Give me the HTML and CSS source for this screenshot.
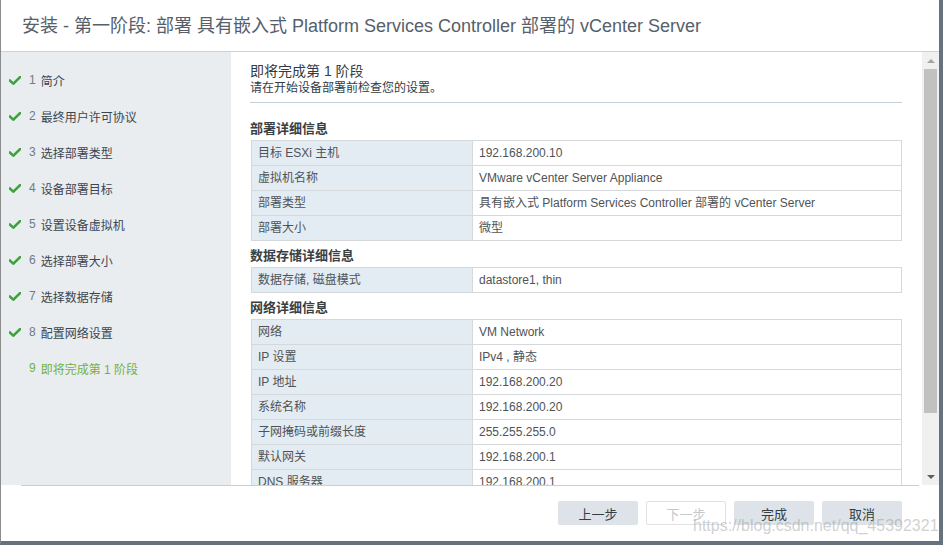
FILE: index.html
```html
<!DOCTYPE html>
<html lang="zh-CN">
<head>
<meta charset="utf-8">
<title>安装 - 第一阶段</title>
<link rel="stylesheet" href="styles.css">
</head>
<body>
<div class="window">
  <header class="title-bar">
    <h1 class="title">安装 - 第一阶段: 部署 具有嵌入式 Platform Services Controller 部署的 vCenter Server</h1>
  </header>
  <div class="main">
    <nav class="steps">
      <div class="step done"><span class="slot"><svg class="check" viewBox="0 0 12 9" width="12" height="9"><path d="M1 4.6 L4.4 7.6 L11 1.2" /></svg></span><span class="num">1</span><span class="label">简介</span></div>
      <div class="step done"><span class="slot"><svg class="check" viewBox="0 0 12 9" width="12" height="9"><path d="M1 4.6 L4.4 7.6 L11 1.2" /></svg></span><span class="num">2</span><span class="label">最终用户许可协议</span></div>
      <div class="step done"><span class="slot"><svg class="check" viewBox="0 0 12 9" width="12" height="9"><path d="M1 4.6 L4.4 7.6 L11 1.2" /></svg></span><span class="num">3</span><span class="label">选择部署类型</span></div>
      <div class="step done"><span class="slot"><svg class="check" viewBox="0 0 12 9" width="12" height="9"><path d="M1 4.6 L4.4 7.6 L11 1.2" /></svg></span><span class="num">4</span><span class="label">设备部署目标</span></div>
      <div class="step done"><span class="slot"><svg class="check" viewBox="0 0 12 9" width="12" height="9"><path d="M1 4.6 L4.4 7.6 L11 1.2" /></svg></span><span class="num">5</span><span class="label">设置设备虚拟机</span></div>
      <div class="step done"><span class="slot"><svg class="check" viewBox="0 0 12 9" width="12" height="9"><path d="M1 4.6 L4.4 7.6 L11 1.2" /></svg></span><span class="num">6</span><span class="label">选择部署大小</span></div>
      <div class="step done"><span class="slot"><svg class="check" viewBox="0 0 12 9" width="12" height="9"><path d="M1 4.6 L4.4 7.6 L11 1.2" /></svg></span><span class="num">7</span><span class="label">选择数据存储</span></div>
      <div class="step done"><span class="slot"><svg class="check" viewBox="0 0 12 9" width="12" height="9"><path d="M1 4.6 L4.4 7.6 L11 1.2" /></svg></span><span class="num">8</span><span class="label">配置网络设置</span></div>
      <div class="step active"><span class="slot"></span><span class="num">9</span><span class="label">即将完成第 1 阶段</span></div>
    </nav>
    <section class="content">
      <div class="scroll">
        <h2 class="page-title">即将完成第 1 阶段</h2>
        <p class="page-sub">请在开始设备部署前检查您的设置。</p>
        <div class="divider"></div>

        <h3 class="section first">部署详细信息</h3>
        <div class="kv">
          <div class="kv-row"><div class="k">目标 ESXi 主机</div><div class="v">192.168.200.10</div></div>
          <div class="kv-row"><div class="k">虚拟机名称</div><div class="v">VMware vCenter Server Appliance</div></div>
          <div class="kv-row"><div class="k">部署类型</div><div class="v">具有嵌入式 Platform Services Controller 部署的 vCenter Server</div></div>
          <div class="kv-row"><div class="k">部署大小</div><div class="v">微型</div></div>
        </div>

        <h3 class="section">数据存储详细信息</h3>
        <div class="kv">
          <div class="kv-row"><div class="k">数据存储, 磁盘模式</div><div class="v">datastore1, thin</div></div>
        </div>

        <h3 class="section">网络详细信息</h3>
        <div class="kv">
          <div class="kv-row"><div class="k">网络</div><div class="v">VM Network</div></div>
          <div class="kv-row"><div class="k">IP 设置</div><div class="v">IPv4 , 静态</div></div>
          <div class="kv-row"><div class="k">IP 地址</div><div class="v">192.168.200.20</div></div>
          <div class="kv-row"><div class="k">系统名称</div><div class="v">192.168.200.20</div></div>
          <div class="kv-row"><div class="k">子网掩码或前缀长度</div><div class="v">255.255.255.0</div></div>
          <div class="kv-row"><div class="k">默认网关</div><div class="v">192.168.200.1</div></div>
          <div class="kv-row"><div class="k">DNS 服务器</div><div class="v">192.168.200.1</div></div>
        </div>
      </div>
      <div class="scrollbar">
        <div class="sb-btn"><span class="arrow up"></span></div>
        <div class="sb-track"><div class="sb-thumb"></div></div>
        <div class="sb-btn"><span class="arrow down"></span></div>
      </div>
    </section>
  </div>
  <footer class="footer">
    <div class="footer-line"></div>
    <div class="buttons">
      <button class="btn">上一步</button>
      <button class="btn disabled">下一步</button>
      <button class="btn">完成</button>
      <button class="btn">取消</button>
    </div>
  </footer>
  <div class="watermark">https://blog.csdn.net/qq_45392321</div>
</div>
</body>
</html>
```

FILE: styles.css
```css
* { box-sizing: border-box; }

html, body {
  margin: 0;
  padding: 0;
  background: #ffffff;
}

body {
  font-family: "Liberation Sans", "Noto Sans CJK SC", sans-serif;
  width: 943px;
  height: 545px;
  overflow: hidden;
}

.window {
  position: relative;
  width: 943px;
  height: 545px;
  border-left: 1px solid #8c8c8c;
  border-right: 4px solid #66727d;
  border-bottom: 4px solid #66727d;
  display: flex;
  flex-direction: column;
  background: #ffffff;
}

.title-bar {
  height: 52px;
  flex: none;
  border-bottom: 1px solid #cfd3d6;
  display: flex;
  align-items: center;
  padding-left: 21px;
}

.title {
  margin: 0;
  font-size: 18px;
  font-weight: normal;
  color: #56606a;
  line-height: 22px;
  white-space: nowrap;
}

.main {
  height: 433px;
  flex: none;
  display: flex;
}

.steps {
  width: 230px;
  flex: none;
  background: #e9edf0;
  padding: 10px 0 0 8px;
}

.step {
  height: 36px;
  display: flex;
  align-items: center;
  font-size: 12px;
  color: #3b4650;
}

.slot {
  width: 20px;
  flex: none;
  display: flex;
  align-items: center;
}

.check path {
  fill: none;
  stroke: #3aa536;
  stroke-width: 2.6;
  stroke-linecap: square;
}

.num {
  color: #6f7a84;
  margin-right: 5px;
}

.step.active .num,
.step.active .label {
  color: #74b044;
}

.content {
  flex: 1;
  display: flex;
  min-width: 0;
}

.scroll {
  flex: 1;
  overflow: hidden;
  padding: 11px 20px 0 19px;
}

.page-title {
  margin: 0;
  font-size: 14px;
  font-weight: normal;
  line-height: 17px;
  color: #333b43;
}

.page-sub {
  margin: 0;
  font-size: 12px;
  line-height: 16px;
  color: #333b43;
}

.divider {
  margin-top: 6px;
  height: 1px;
  background: #c6d0d6;
}

.section {
  margin: 0;
  padding: 6px 0 3px;
  font-size: 13px;
  font-weight: bold;
  line-height: 17px;
  color: #3a3f44;
}

.section.first {
  margin-top: 11px;
}

.kv {
  margin-left: 1px;
  border: 1px solid #d6d9dc;
}

.kv-row {
  display: grid;
  grid-template-columns: 221px 1fr;
  height: 24px;
  box-sizing: content-box;
  border-top: 1px solid #d6d9dc;
  font-size: 12px;
  line-height: 23px;
  color: #505356;
}

.kv-row:first-child {
  border-top: none;
}

.k {
  background: #e3ecf3;
  border-right: 1px solid #d6d9dc;
  padding: 1px 0 0 6px;
  white-space: nowrap;
}

.v {
  padding: 1px 0 0 6px;
  white-space: nowrap;
  overflow: hidden;
}

.scrollbar {
  width: 17px;
  flex: none;
  background: #f0f0f0;
  display: flex;
  flex-direction: column;
}

.sb-btn {
  height: 17px;
  flex: none;
  display: flex;
  align-items: center;
  justify-content: center;
}

.arrow {
  width: 0;
  height: 0;
  border-left: 4px solid transparent;
  border-right: 4px solid transparent;
}

.arrow.up {
  border-bottom: 4px solid #a3a3a3;
}

.arrow.down {
  border-top: 4px solid #5f5f5f;
}

.sb-track {
  flex: 1;
}

.sb-thumb {
  margin: 0 2px;
  height: 344px;
  background: #c1c1c1;
}

.footer {
  flex: 1;
}

.footer-line {
  margin: 0 20px;
  height: 1px;
  background: #c8ced3;
}

.buttons {
  display: flex;
  justify-content: flex-end;
  gap: 8px;
  padding: 15px 37px 0 0;
}

.btn {
  width: 80px;
  height: 24px;
  border: 1px solid #dde3e8;
  border-radius: 2px;
  background: #dde3e8;
  font-family: "Liberation Sans", "Noto Sans CJK SC", sans-serif;
  font-size: 13px;
  color: #343e47;
  padding: 0;
}

.btn.disabled {
  background: #ffffff;
  border-color: #dfe3e6;
  color: #c4c9ce;
}

.watermark {
  position: absolute;
  left: 692px;
  top: 517px;
  font-size: 16px;
  line-height: 18px;
  color: rgba(150, 150, 150, 0.45);
  white-space: nowrap;
  pointer-events: none;
}
```
